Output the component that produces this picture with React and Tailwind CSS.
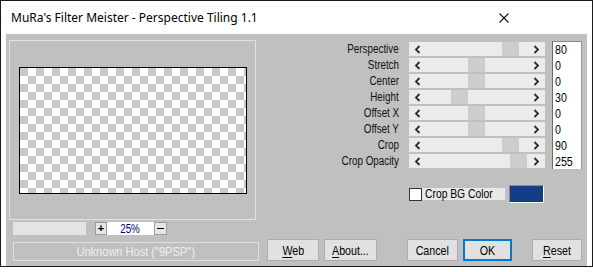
import React from "react";

const sans = "font-['Liberation_Sans',Arial,sans-serif]";

// squeeze Liberation Sans to the width of the dialog's narrow face
const N = ({ children, origin = "origin-center", k = "scale-x-[0.82]" }) => (
  <span className={`inline-block whitespace-nowrap ${k} ${origin}`}>{children}</span>
);

const sliders = [
  { label: "Perspective", value: "80", pos: 93 },
  { label: "Stretch", value: "0", pos: 59 },
  { label: "Center", value: "0", pos: 59 },
  { label: "Height", value: "30", pos: 42 },
  { label: "Offset X", value: "0", pos: 59 },
  { label: "Offset Y", value: "0", pos: 59 },
  { label: "Crop", value: "90", pos: 93 },
  { label: "Crop Opacity", value: "255", pos: 101 },
];

const Chevron = ({ dir }) => (
  <svg width="7" height="9" viewBox="0 0 7 9" className="shrink-0">
    <path
      d={dir === "left" ? "M5.5 1 L2 4.5 L5.5 8" : "M1.5 1 L5 4.5 L1.5 8"}
      fill="none"
      stroke="#2e2e2e"
      strokeWidth="1.8"
    />
  </svg>
);

const SliderRow = ({ label, value, pos, first }) => (
  <div className="flex h-[16px] items-center">
    <div className={`w-[131px] text-right text-[12px] leading-none text-[#111] ${sans}`}>
      <N origin="origin-right">{label}</N>
    </div>
    <div className="relative ml-[10px] flex h-[14px] w-[136px] items-center justify-between bg-[#ebebeb] px-[5px]">
      <div
        className="absolute top-0 h-[14px] w-[17px] bg-[#cdcdcd]"
        style={{ left: pos }}
      />
      <Chevron dir="left" />
      <Chevron dir="right" />
    </div>
    <div
      className={`ml-[7px] flex h-[16px] w-[30px] items-center border-l border-r border-l-[#6e6e6e] border-r-[#9a9a9a] bg-white pl-[2px] text-[13px] leading-none text-black ${sans} ${
        first ? "border-t border-t-[#8a8a8a]" : ""
      }`}
    >
      <N origin="origin-left">{value}</N>
    </div>
  </div>
);

const Button = ({ children, className = "", primary }) => (
  <div
    className={`flex h-[22px] items-center justify-center bg-[#e1e1e1] text-[13px] leading-none text-black ${sans} ${
      primary ? "border-2 border-[#0078d7]" : "border border-[#adadad]"
    } ${className}`}
  >
    <N>{children}</N>
  </div>
);

export default function App() {
  return (
    <div className="h-[272px] w-[593px] bg-white">
      <div className="h-[267px] w-[593px] border border-[#1b1b1b]">
        {/* title bar */}
        <div className="flex h-[33px] items-center justify-between bg-white pl-[10px] pr-[83px]">
          <span className="font-['Noto_Sans',sans-serif] text-[12px] text-black">
            MuRa's Filter Meister - Perspective Tiling 1.1
          </span>
          <svg width="10" height="10" viewBox="0 0 10 10">
            <path d="M0.5 0.5 L9.5 9.5 M9.5 0.5 L0.5 9.5" stroke="#111" strokeWidth="1.1" />
          </svg>
        </div>

        {/* client area */}
        <div className="mx-[5px] flex h-[232px] w-[581px] flex-col bg-[#c0c0c0] pl-[3px] pt-[6px]">
          <div className="flex">
            {/* left column */}
            <div className="w-[259px]">
              <div className="h-[180px] w-[247px] border border-[#e2e2e2] pl-[9px] pt-[26px]">
                <div className="h-[127px] w-[228px] border border-black bg-[conic-gradient(#fff_25%,#c8c8c8_0_50%,#fff_0_75%,#c8c8c8_0)] bg-[length:16px_16px]" />
              </div>
              <div className="mt-[2px] flex h-[13px] items-center pl-[4px]">
                <div className="h-[13px] w-[73px] bg-[#e4e4e4]" />
                <div className={`ml-[9px] flex h-[13px] w-[12px] items-center justify-center border border-[#9a9a9a] bg-[#e6e6e6] text-[11px] font-bold leading-none text-black ${sans}`}>
                  +
                </div>
                <div className={`flex h-[13px] w-[47px] items-center justify-center bg-white text-[12px] leading-none text-[#000080] ${sans}`}>
                  <N>25%</N>
                </div>
                <div className="flex h-[13px] w-[13px] items-center justify-center border border-[#9a9a9a] bg-[#e6e6e6]">
                  <div className="h-[1px] w-[7px] bg-black" />
                </div>
              </div>
            </div>

            {/* right column */}
            <div className="pt-[1px]">
              {sliders.map((s, i) => (
                <SliderRow key={s.label} {...s} first={i === 0} />
              ))}
              <div className="ml-[141px] mt-[16px] flex h-[18px] items-center">
                <div className="h-[13px] w-[13px] border border-[#333] bg-white" />
                <div className={`flex h-[12px] w-[83px] items-center bg-[#e8e8e8] pl-[3px] text-[12px] leading-none text-black ${sans}`}>
                  <N origin="origin-left" k="scale-x-[0.86]">Crop BG Color</N>
                </div>
                <div className="ml-[4px] h-[18px] w-[35px] border border-b-white border-l-[#8a8a8a] border-r-white border-t-[#8a8a8a] bg-[#123e86]" />
              </div>
            </div>
          </div>

          {/* bottom row */}
          <div className="mt-[4px] flex items-end">
            <div
              className={`ml-[4px] flex h-[19px] w-[246px] items-center justify-center border border-[#e0e0e0] text-[13px] leading-none text-[#ededed] ${sans}`}
            >
              <N k="scale-x-[0.85]">Unknown Host ("9PSP")</N>
            </div>
            <Button className="ml-[8px] w-[52px]">
              <span className="underline underline-offset-2">W</span>eb
            </Button>
            <Button className="ml-[5px] w-[53px]">
              <span className="underline underline-offset-2">A</span>bout...
            </Button>
            <Button className="ml-[30px] w-[51px]">Cancel</Button>
            <Button className="ml-[5px] w-[49px]" primary>
              OK
            </Button>
            <Button className="ml-[20px] w-[50px]">
              <span className="underline underline-offset-2">R</span>eset
            </Button>
          </div>
        </div>
      </div>
    </div>
  );
}
